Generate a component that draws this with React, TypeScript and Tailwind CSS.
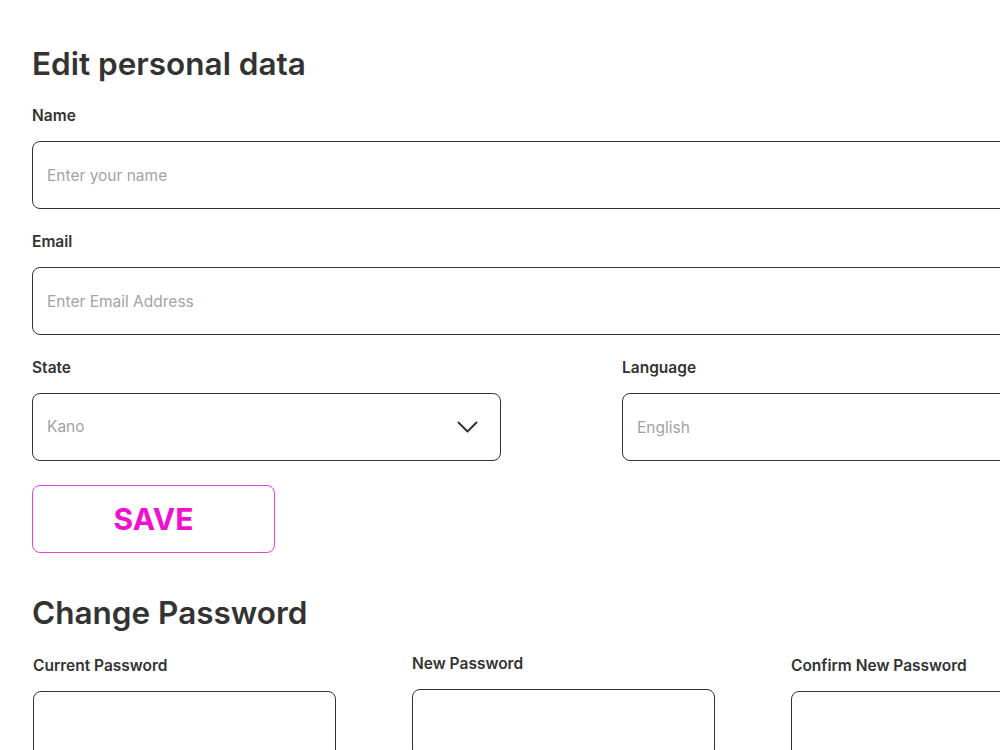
import React from "react";

const Field = ({ label, placeholder, className = "" }: { label: string; placeholder?: string; className?: string }) => (
  <div className={className}>
    <label className="block text-[15.5px] font-semibold leading-5 text-[#333]">{label}</label>
    <input
      className="mt-[15px] block h-[68px] w-full rounded-lg border border-[#333] bg-white px-[14px] text-[15.5px] text-[#333] placeholder-[#a3a3a3] outline-none"
      placeholder={placeholder}
    />
  </div>
);

const App = () => {
  return (
    <div className="min-h-screen w-full overflow-hidden bg-white font-['Inter',sans-serif] text-[#333]">
      <div className="w-[1091px] pl-8 pt-[44px]">
        <h1 className="text-[31.5px] font-semibold leading-[40px]">Edit personal data</h1>

        <div className="mt-[22px] flex flex-col gap-[23px]">
          <Field label="Name" placeholder="Enter your name" />
          <Field label="Email" placeholder="Enter Email Address" />

          <div className="grid grid-cols-2 gap-[121px]">
            <div>
              <label className="block text-[15.5px] font-semibold leading-5 text-[#333]">State</label>
              <div className="mt-[15px] flex h-[68px] items-center justify-between rounded-lg border border-[#333] px-[14px]">
                <span className="text-[15.5px] text-[#a3a3a3]">Kano</span>
                <svg width="21" height="12" viewBox="0 0 21 12" fill="none" stroke="#333" strokeWidth="2" strokeLinecap="round" strokeLinejoin="round" className="mr-[8px]">
                  <path d="M1.5 1.5l9 9 9-9" />
                </svg>
              </div>
            </div>
            <Field label="Language" placeholder="English" />
          </div>
        </div>

        <button className="mt-[24px] flex h-[68px] w-[243px] items-center justify-center rounded-lg border border-[#e843d8] text-[30px] font-bold text-[#f20fd0]">
          SAVE
        </button>

        <h2 className="mt-[38px] text-[31.5px] font-semibold leading-[44px]">Change Password</h2>

        <div className="mt-[21px] flex gap-[76px] pl-px">
          <Field label="Current Password" className="w-[303px] shrink-0" />
          <Field label="New Password" className="-mt-[2px] w-[303px] shrink-0" />
          <Field label="Confirm New Password" className="w-[303px] shrink-0" />
        </div>
      </div>
    </div>
  );
};

export default App;
